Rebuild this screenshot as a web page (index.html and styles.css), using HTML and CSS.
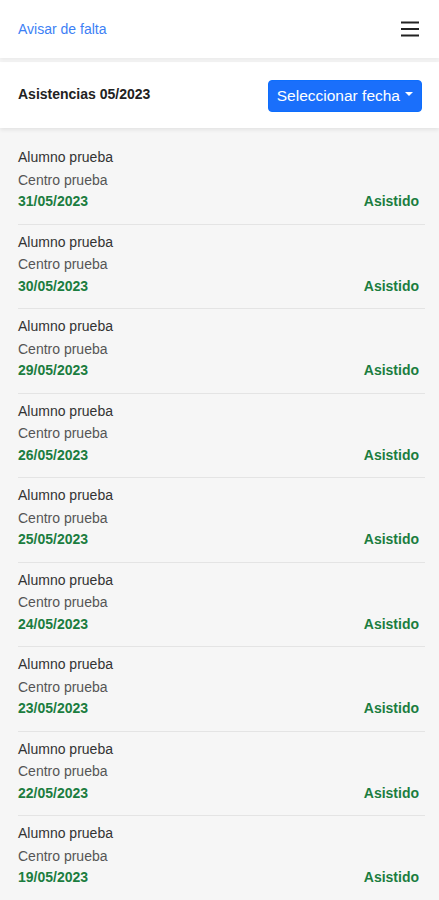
FILE: index.html
```html
<!doctype html>
<html lang="es">
<head>
<meta charset="utf-8">
<title>Asistencias</title>
<meta name="viewport" content="width=device-width, initial-scale=1">
<link rel="stylesheet" href="styles.css">
</head>
<body>

  <nav class="navbar">
    <a class="nav-link" href="#">Avisar de falta</a>
    <button class="toggler" aria-label="Menu">
      <svg width="18" height="16" viewBox="0 0 18 16">
        <path d="M0 1.5h18M0 8h18M0 14.5h18" stroke="#222" stroke-width="2"/>
      </svg>
    </button>
  </nav>

  <div class="header">
    <h2 class="title">Asistencias 05/2023</h2>
    <button class="btn-date">Seleccionar fecha <span class="caret"></span></button>
  </div>

  <div class="list">
    <div class="item">
      <div class="name">Alumno prueba</div>
      <div class="center">Centro prueba</div>
      <div class="row"><span class="date">31/05/2023</span><span class="status">Asistido</span></div>
    </div>
    <div class="item">
      <div class="name">Alumno prueba</div>
      <div class="center">Centro prueba</div>
      <div class="row"><span class="date">30/05/2023</span><span class="status">Asistido</span></div>
    </div>
    <div class="item">
      <div class="name">Alumno prueba</div>
      <div class="center">Centro prueba</div>
      <div class="row"><span class="date">29/05/2023</span><span class="status">Asistido</span></div>
    </div>
    <div class="item">
      <div class="name">Alumno prueba</div>
      <div class="center">Centro prueba</div>
      <div class="row"><span class="date">26/05/2023</span><span class="status">Asistido</span></div>
    </div>
    <div class="item">
      <div class="name">Alumno prueba</div>
      <div class="center">Centro prueba</div>
      <div class="row"><span class="date">25/05/2023</span><span class="status">Asistido</span></div>
    </div>
    <div class="item">
      <div class="name">Alumno prueba</div>
      <div class="center">Centro prueba</div>
      <div class="row"><span class="date">24/05/2023</span><span class="status">Asistido</span></div>
    </div>
    <div class="item">
      <div class="name">Alumno prueba</div>
      <div class="center">Centro prueba</div>
      <div class="row"><span class="date">23/05/2023</span><span class="status">Asistido</span></div>
    </div>
    <div class="item">
      <div class="name">Alumno prueba</div>
      <div class="center">Centro prueba</div>
      <div class="row"><span class="date">22/05/2023</span><span class="status">Asistido</span></div>
    </div>
    <div class="item">
      <div class="name">Alumno prueba</div>
      <div class="center">Centro prueba</div>
      <div class="row"><span class="date">19/05/2023</span><span class="status">Asistido</span></div>
    </div>
  </div>

</body>
</html>
```

FILE: styles.css
```css
* { box-sizing: border-box; }

body {
  margin: 0;
  background-color: #f6f6f6;
  color: #333;
  font-family: "Liberation Sans", Arial, sans-serif;
  font-size: 14px;
}

.navbar {
  display: flex;
  align-items: center;
  justify-content: space-between;
  height: 58px;
  padding: 0 20px 0 18px;
  background-color: #fff;
  box-shadow: 0 2px 4px rgba(0, 0, 0, 0.05);
  position: relative;
  z-index: 2;
}

.nav-link {
  color: #3d7ff5;
  text-decoration: none;
  font-size: 14px;
}

.toggler {
  border: none;
  background: none;
  padding: 0;
  margin: 0;
  width: 20px;
  height: 16px;
  display: flex;
  align-items: center;
  justify-content: flex-end;
  margin-top: -1px;
}

.header {
  display: flex;
  align-items: center;
  justify-content: space-between;
  height: 66px;
  margin-top: 4px;
  padding: 1px 17px 0 18px;
  background-color: #fff;
  box-shadow: 0 2px 4px rgba(0, 0, 0, 0.08);
  position: relative;
  z-index: 1;
}

.title {
  margin: 0;
  font-size: 14px;
  font-weight: bold;
  color: #222;
  margin-top: -4px;
}

.btn-date {
  display: flex;
  align-items: center;
  gap: 5px;
  height: 32px;
  padding: 0 8px;
  border: 1px solid #0d6efd;
  border-radius: 4px;
  background-color: #1a6ffb;
  color: #fff;
  font-family: inherit;
  font-size: 15.5px;
}

.caret {
  width: 0;
  height: 0;
  border-left: 4px solid transparent;
  border-right: 4px solid transparent;
  border-top: 4.5px solid #fff;
  margin-top: -3px;
}

.list {
  padding: 12px 14px 0 18px;
}

.item {
  padding: 7px 6px 11px 0;
  border-bottom: 1px solid #e4e4e4;
  line-height: 21.5px;
}

.name {
  color: #333;
}

.center {
  color: #555;
  margin-top: 1px;
}

.row {
  display: flex;
  justify-content: space-between;
  font-weight: bold;
  color: #1b7d3f;
}
```
